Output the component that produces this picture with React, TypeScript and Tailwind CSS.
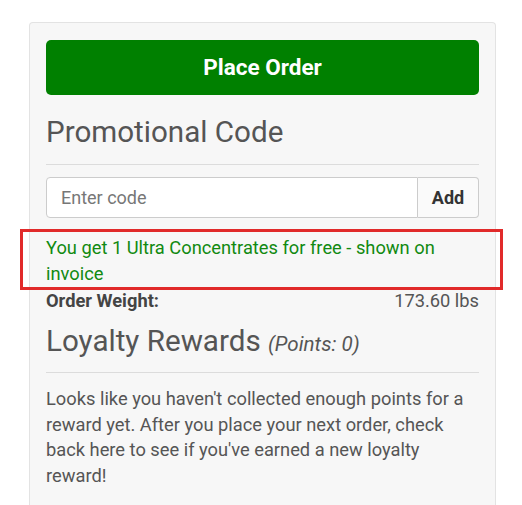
export default function App() {
  return (
    <div className="min-h-[505px] bg-white pt-[22px] pl-[29px] font-['Roboto','Liberation_Sans',sans-serif] text-[#555]">
      <div className="w-[467px] h-[500px] rounded-t-[4px] border border-b-0 border-[#e3e3e3] bg-[#f7f7f7] px-[16px] pt-[17px]">
        <button
          type="button"
          className="flex h-[55px] w-full items-center justify-center rounded-[5px] bg-[#008000] text-[22.5px] font-bold text-white"
        >
          Place Order
        </button>

        <h3 className="mt-[19px] text-[29.6px] leading-[36px] text-[#555]">Promotional Code</h3>
        <hr className="mt-[14px] border-t border-[#dcdcdc]" />

        <div className="mt-[12px] flex h-[41px]">
          <input
            type="text"
            placeholder="Enter code"
            className="h-full min-w-0 flex-1 rounded-l-[4px] border border-[#ccc] bg-white px-[14px] text-[18px] text-[#555] placeholder:text-[#777] outline-none"
          />
          <button
            type="button"
            className="h-full w-[61px] rounded-r-[4px] border border-l-0 border-[#ccc] bg-[#fafafa] text-[18px] font-bold text-[#333]"
          >
            Add
          </button>
        </div>

        <div className="relative mt-[17px]">
          <p className="text-[18.3px] leading-[26px] text-[#118a11]">
            You get 1 Ultra Concentrates for free - shown on invoice
          </p>
          <div className="pointer-events-none absolute -left-[26px] -right-[24px] -top-[6px] -bottom-[3px] border-[3px] border-[#e12a2a]" />
        </div>

        <div className="mt-[2px] flex justify-between text-[18.3px] leading-[24px] text-[#444]">
          <span className="font-bold">Order Weight:</span>
          <span className="text-[#555]">173.60 lbs</span>
        </div>

        <h3 className="mt-[10px] text-[29.6px] leading-[36px] text-[#555]">
          Loyalty Rewards <small className="text-[20.6px] italic">(Points: 0)</small>
        </h3>
        <hr className="mt-[10px] border-t border-[#dcdcdc]" />

        <p className="mt-[13px] text-[18.3px] leading-[25.5px] text-[#555]">
          Looks like you haven't collected enough points for a reward yet. After you place your next order, check back here
          to see if you've earned a new loyalty reward!
        </p>
      </div>
    </div>
  );
}
